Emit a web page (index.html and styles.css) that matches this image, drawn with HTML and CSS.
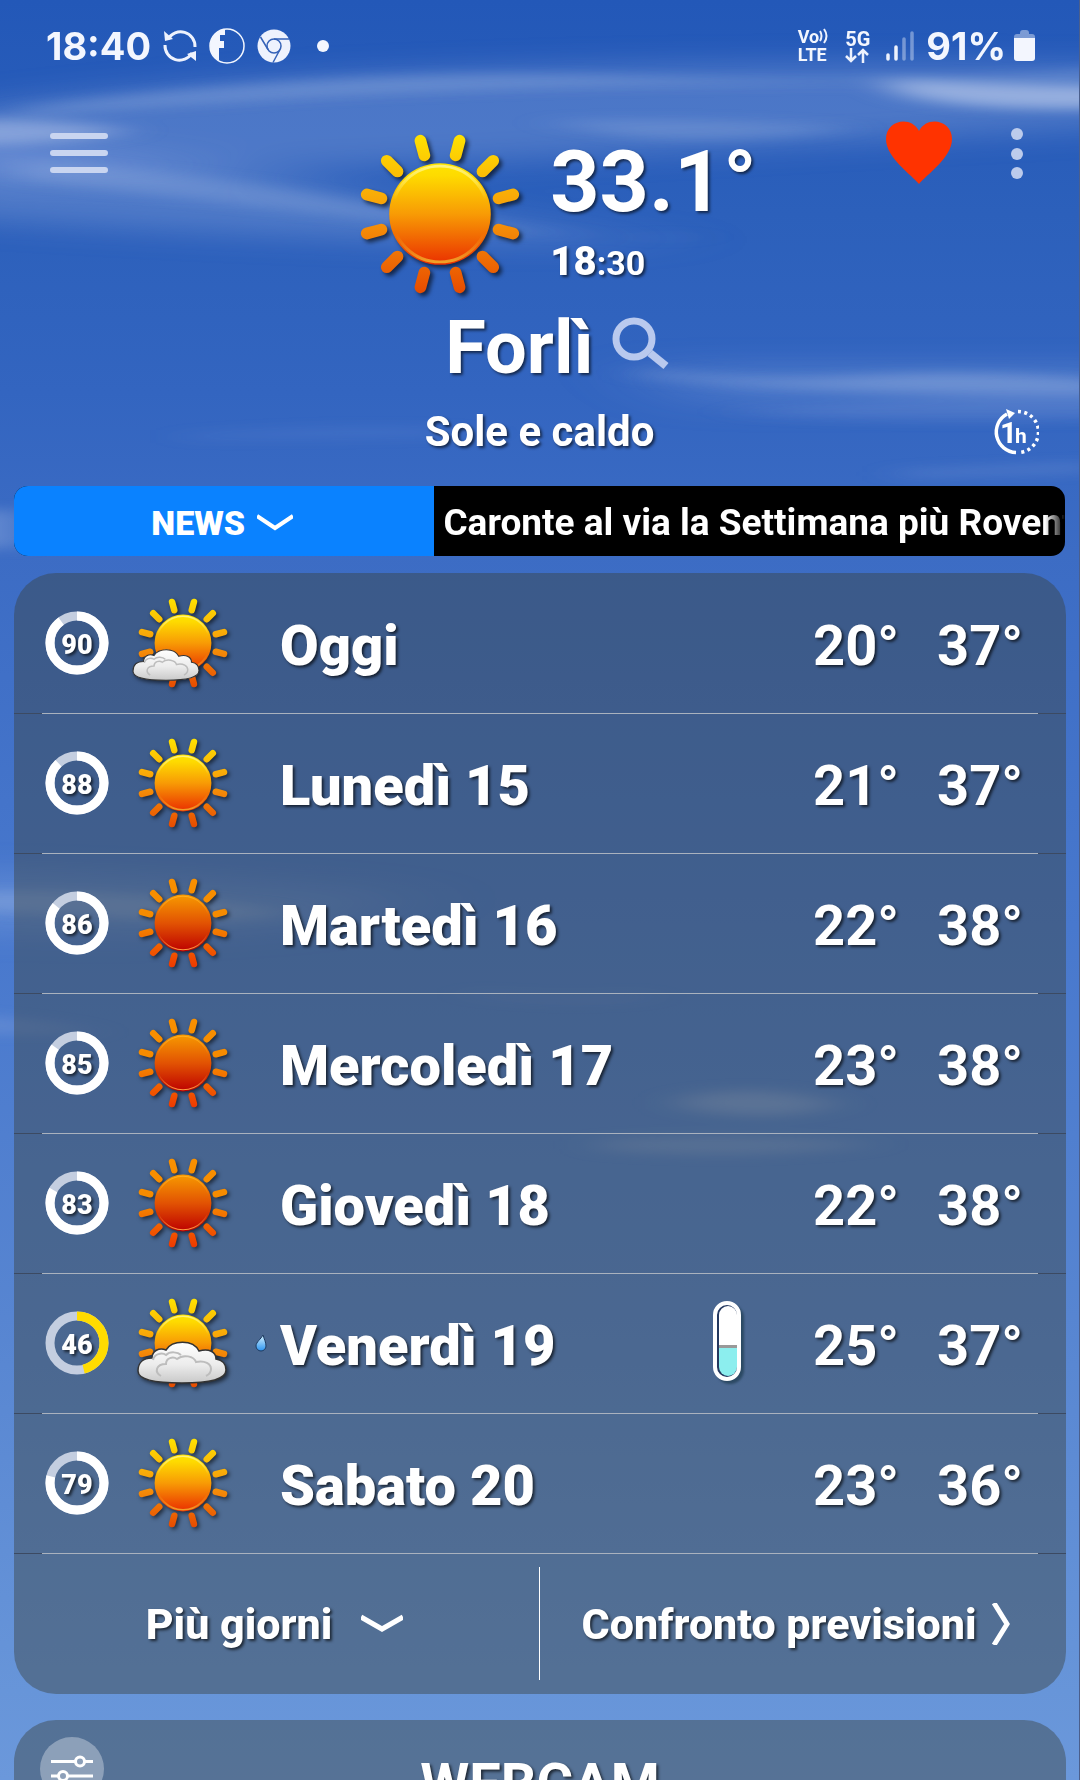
FILE: index.html
```html
<!DOCTYPE html>
<html lang="it">
<head>
<meta charset="utf-8">
<meta name="viewport" content="width=device-width, initial-scale=1">
<title>Meteo Forlì</title>
<link rel="stylesheet" href="styles.css">
</head>
<body>
<svg class="defs" aria-hidden="true">
  <defs>
    <linearGradient id="disc" x1="0" y1="0" x2="0" y2="1">
      <stop offset="0" stop-color="#ffe400"/><stop offset=".12" stop-color="#fedb00"/><stop offset=".5" stop-color="#f89b05"/><stop offset="1" stop-color="#ea2e00"/>
    </linearGradient>
    <linearGradient id="disc-hot" x1="0" y1="0" x2="0" y2="1">
      <stop offset="0" stop-color="#f79a00"/><stop offset=".5" stop-color="#e25303"/><stop offset="1" stop-color="#bd0000"/>
    </linearGradient>
    <linearGradient id="rays" gradientUnits="userSpaceOnUse" x1="0" y1="-82" x2="0" y2="82">
      <stop offset="0" stop-color="#ffe300"/><stop offset=".5" stop-color="#f79a0a"/><stop offset="1" stop-color="#e74a00"/>
    </linearGradient>
    <linearGradient id="rays-hot" gradientUnits="userSpaceOnUse" x1="0" y1="-82" x2="0" y2="82">
      <stop offset="0" stop-color="#f99000"/><stop offset=".5" stop-color="#f58a00"/><stop offset="1" stop-color="#ee3800"/>
    </linearGradient>
    <linearGradient id="rim" x1="0" y1="0" x2="0" y2="1">
      <stop offset="0" stop-color="#fff27a"/><stop offset=".35" stop-color="#fff27a" stop-opacity="0"/><stop offset=".7" stop-color="#f4a020" stop-opacity="0"/><stop offset="1" stop-color="#f0a028"/>
    </linearGradient>
    <linearGradient id="rim-hot" x1="0" y1="0" x2="0" y2="1">
      <stop offset="0" stop-color="#ffb020"/><stop offset=".35" stop-color="#ffb020" stop-opacity="0"/><stop offset=".7" stop-color="#ffa040" stop-opacity="0"/><stop offset="1" stop-color="#ffa040"/>
    </linearGradient>
    <linearGradient id="puff" x1="0" y1="0" x2="0" y2="1">
      <stop offset="0" stop-color="#fff"/><stop offset=".55" stop-color="#ececec"/><stop offset="1" stop-color="#c9c9c9"/>
    </linearGradient>
    <linearGradient id="water" x1="0" y1="0" x2="0" y2="1">
      <stop offset="0" stop-color="#d8f4ff"/><stop offset="1" stop-color="#2a93f0"/>
    </linearGradient>
    <path id="beams" fill="none" stroke-width="12" stroke-linecap="round" d="M16 -60L20 -75M43.500 -43.500L54.500 -54.500M60 -16L75 -20M60 16L75 20M43.500 43.500L54.500 54.500M16 60L20 75M-16 60L-20 75M-43.500 43.500L-54.500 54.500M-60 16L-75 20M-60 -16L-75 -20M-43.500 -43.500L-54.500 -54.500M-16 -60L-20 -75"/>
    <symbol id="sun" viewBox="-86 -86 172 172">
      <use href="#beams" stroke="url(#rays)"/>
      <circle r="52" fill="url(#disc)"/><circle r="49" fill="none" stroke="url(#rim)" stroke-width="3"/>
    </symbol>
    <symbol id="sun-hot" viewBox="-86 -86 172 172">
      <use href="#beams" stroke="url(#rays-hot)"/>
      <circle r="52" fill="url(#disc-hot)"/><circle r="49" fill="none" stroke="url(#rim-hot)" stroke-width="2"/>
    </symbol>
    <symbol id="cloud" viewBox="0 0 90 44">
      <path d="M15 18C15 11 22 7 29 10C35 0 56 -1 62 11C72 8 79 12 79 19C86 20 89 25 89 30C89 40 72 43 45 43C18 43 1 40 1 31C1 23 6 18 15 18Z" fill="url(#puff)" stroke="#333" stroke-width="1.500"/>
      <path d="M24 36C17 32 19 24 29 24C29 18 36 16 40 19C46 14 57 16 59 22C68 20 74 24 74 29C74 33 71 35 69 36M16 20C17 14 25 12 29 15C33 11 41 12 44 15" fill="none" stroke="#bdbdbd" stroke-width="2"/>
    </symbol>
  </defs>
</svg>

<div class="screen">
  <svg class="sky" viewBox="0 0 1080 1780" preserveAspectRatio="none" aria-hidden="true">
    <defs>
      <filter id="soft" x="-50%" y="-200%" width="200%" height="500%"><feGaussianBlur stdDeviation="22 6"/></filter>
      <filter id="haze" x="-50%" y="-200%" width="200%" height="500%"><feGaussianBlur stdDeviation="50 14"/></filter>
    </defs>
    <g filter="url(#haze)" fill="#b4c6ee">
      <path d="M-100 120Q300 50 1180 66V124Q700 150 500 160T-100 180Z" opacity=".26"/>
      <path d="M-100 140Q150 144 340 190T700 240Q420 250 -100 214Z" opacity=".26"/>
      <path d="M640 366H1180V404H700Z" opacity=".2"/>
      <path d="M-100 870Q160 870 420 896Q300 950 -100 930Z" opacity=".18"/>
    </g>
    <g filter="url(#soft)" fill="#c3d0ee">
      <path d="M880 78Q980 84 1130 86V108Q960 112 900 94Z" opacity=".62"/>
      <path d="M-60 118Q60 118 130 130Q90 144 -60 146Z" opacity=".46"/>
      <path d="M20 108Q340 66 620 76T1120 68V78Q900 82 640 86T20 116Z" opacity=".26"/>
      <path d="M20 160Q200 170 400 208T720 236Q560 240 400 222T20 180Z" opacity=".2"/>
      <path d="M540 122Q700 116 860 128Q760 144 640 138Z" opacity=".2"/>
      <path d="M640 368Q740 384 860 376T1120 382V392Q850 398 640 376Z" opacity=".3"/>
      <path d="M720 412Q900 398 1120 390V418Q900 426 720 412Z" opacity=".12"/>
      <path d="M180 434Q420 418 500 434Q420 440 180 440Z" opacity=".08"/>
      <path d="M900 470L1100 462V472L900 478Z" opacity=".16"/>
      <path d="M-60 510H20V548H-60Z" opacity=".3"/>
      <path d="M-60 892Q120 886 290 912Q240 928 60 914L-60 910Z" opacity=".22"/>
      <path d="M-60 1012Q60 1020 100 1034H-60Z" opacity=".16"/>
      <path d="M680 1098Q760 1080 840 1104Q780 1126 680 1108Z" opacity=".32"/>
      <path d="M600 1140Q740 1130 880 1144Q760 1162 600 1150Z" opacity=".24"/>
      <path d="M470 990Q560 1000 650 992V1000Q560 1008 470 996Z" opacity=".1"/>
    </g>
  </svg>

  <div class="status">
    <div class="status-left">
      <span class="clock">18:40</span>
      <svg class="i34" viewBox="0 0 34 34" fill="none" stroke="#eef2fd" stroke-width="3"><path d="M5 10A14.500 14.500 0 0 1 32 18M29 24A14.500 14.500 0 0 1 2 16"/><path d="M1 2L2 12L10 10ZM33 32V22L24 25Z" fill="#eef2fd" stroke="none"/></svg>
      <svg class="i36" viewBox="0 0 36 36"><clipPath id="round"><circle cx="18" cy="18" r="17"/></clipPath><path clip-path="url(#round)" fill="#f3f6fe" d="M0 0H16V7H11V13H15V20H10V36H0Z"/><circle cx="18" cy="18" r="17" fill="none" stroke="#f3f6fe" stroke-width="1.500"/></svg>
      <svg class="i34" viewBox="0 0 34 34"><circle cx="17" cy="17" r="16.500" fill="#eef2fd"/><g fill="none" stroke="#3562b8" stroke-width="1.500"><circle cx="17" cy="17" r="7"/><path d="M17 10H32M11 20.500L3.500 8M23 20.500L16 33.500"/></g></svg>
      <svg class="i12" viewBox="0 0 12 12"><circle cx="6" cy="6" r="6" fill="#f3f6fe"/></svg>
    </div>
    <div class="status-right">
      <span class="net"><span class="volte">Vo<svg viewBox="0 0 10 16" fill="none" stroke="#eef2fd" stroke-width="2"><path d="M1 3Q4 8 1 13M5 1Q10 8 5 15"/></svg></span><span>LTE</span></span>
      <span class="net"><span class="five">5G</span><svg class="updown" viewBox="0 0 24 15" fill="none" stroke="#eef2fd" stroke-width="2.500"><path d="M6 0V13M1 8L6 13L11 8M18 15V2M13 7L18 2L23 7"/></svg></span>
      <svg class="bars" viewBox="0 0 28 30" fill="none" stroke="#eef2fd" stroke-width="3.500" stroke-linecap="round"><path d="M2 24V28M10 16V28"/><path d="M18 8V28M26 2V28" opacity=".4"/></svg>
      <span class="clock">91%</span>
      <svg class="battery" viewBox="0 0 21 32"><path d="M6 3Q6 0 9 0H12Q15 0 15 3V4H18Q21 4 21 7V9H0V7Q0 4 3 4H6Z" fill="#fff" opacity=".4"/><path d="M0 8H21V28Q21 31 18 31H3Q0 31 0 28Z" fill="#f3f6fe"/></svg>
    </div>
  </div>

  <header class="top">
    <button class="plain menu" aria-label="Menu"><svg viewBox="0 0 58 42" stroke="#c9d5f0" stroke-width="6" stroke-linecap="round"><path d="M3 4H55M3 21H55M3 38H55"/></svg></button>
    <div class="now">
      <svg class="now-sun" viewBox="0 0 172 172"><use href="#sun" x="2" y="2" width="168" height="168"/></svg>
      <div>
        <div class="degrees">33.1°</div>
        <div class="time">18<small>:30</small></div>
      </div>
    </div>
    <div class="actions">
      <button class="plain" aria-label="Preferito"><svg class="heart" viewBox="0 0 66 64"><path fill="#ff3300" d="M33 64C26 55 0 38 0 19C0 0 25 -5 33 11C41 -5 66 0 66 19C66 38 40 55 33 64Z"/></svg></button>
      <button class="plain kebab" aria-label="Altro"><svg viewBox="0 0 12 52" fill="#bccbec"><circle cx="6" cy="6" r="6"/><circle cx="6" cy="26" r="6"/><circle cx="6" cy="45" r="6"/></svg></button>
    </div>
  </header>

  <div class="place">
    <h1>Forlì</h1>
    <button class="plain" aria-label="Cerca"><svg class="search" viewBox="0 0 58 54" fill="none" stroke="#b9c9ee"><circle cx="22" cy="22" r="18" stroke-width="7"/><path d="M38 36L54 49" stroke-width="8"/></svg></button>
  </div>
  <div class="summary">
    <p>Sole e caldo</p>
    <button class="plain hourly" aria-label="Previsioni orarie">
      <svg viewBox="0 0 46 46" fill="none" stroke="#fff" stroke-width="3.500"><path d="M23 43.500A20.500 20.500 0 0 1 14 5"/><path d="M25 2.500A20.500 20.500 0 0 1 25 43.500" stroke-dasharray="3 3.400"/><path d="M13 0L22 4L16 10Z" fill="#fff" stroke="none"/><text x="7" y="34" font-size="30" fill="#fff" stroke="none">1</text><text x="22" y="34" font-size="21" fill="#fff" stroke="none">h</text></svg>
    </button>
  </div>

  <div class="news">
    <button class="news-toggle">NEWS <svg viewBox="0 0 36 18" fill="none" stroke="#fff" stroke-width="4"><path d="M0 2L18 14L36 2"/></svg></button>
    <a class="ticker" href="#">Caronte al via la Settimana più Rovente</a>
  </div>

  <main>
    <section class="card">
      <ol class="days">
        <li>
          <svg class="ring" viewBox="0 0 64 64"><circle class="track" cx="32" cy="32" r="27"/><circle class="value" cx="32" cy="32" r="27" pathLength="100" stroke-dasharray="90 100"/><text x="32" y="43">90</text></svg>
          <span class="sky-icon"><svg viewBox="0 0 112 98"><use href="#sun" x="10" y="2" width="94" height="94"/><use href="#cloud" x="6" y="54" width="68" height="33"/></svg></span>
          <span></span><span class="day">Oggi</span><span></span><span class="temp">20°</span><span class="temp">37°</span>
        </li>
        <li>
          <svg class="ring" viewBox="0 0 64 64"><circle class="track" cx="32" cy="32" r="27"/><circle class="value" cx="32" cy="32" r="27" pathLength="100" stroke-dasharray="88 100"/><text x="32" y="43">88</text></svg>
          <span class="sky-icon"><svg viewBox="0 0 112 98"><use href="#sun" x="10" y="2" width="94" height="94"/></svg></span>
          <span></span><span class="day">Lunedì 15</span><span></span><span class="temp">21°</span><span class="temp">37°</span>
        </li>
        <li>
          <svg class="ring" viewBox="0 0 64 64"><circle class="track" cx="32" cy="32" r="27"/><circle class="value" cx="32" cy="32" r="27" pathLength="100" stroke-dasharray="86 100"/><text x="32" y="43">86</text></svg>
          <span class="sky-icon"><svg viewBox="0 0 112 98"><use href="#sun-hot" x="10" y="2" width="94" height="94"/></svg></span>
          <span></span><span class="day">Martedì 16</span><span></span><span class="temp">22°</span><span class="temp">38°</span>
        </li>
        <li>
          <svg class="ring" viewBox="0 0 64 64"><circle class="track" cx="32" cy="32" r="27"/><circle class="value" cx="32" cy="32" r="27" pathLength="100" stroke-dasharray="85 100"/><text x="32" y="43">85</text></svg>
          <span class="sky-icon"><svg viewBox="0 0 112 98"><use href="#sun-hot" x="10" y="2" width="94" height="94"/></svg></span>
          <span></span><span class="day">Mercoledì 17</span><span></span><span class="temp">23°</span><span class="temp">38°</span>
        </li>
        <li>
          <svg class="ring" viewBox="0 0 64 64"><circle class="track" cx="32" cy="32" r="27"/><circle class="value" cx="32" cy="32" r="27" pathLength="100" stroke-dasharray="83 100"/><text x="32" y="43">83</text></svg>
          <span class="sky-icon"><svg viewBox="0 0 112 98"><use href="#sun-hot" x="10" y="2" width="94" height="94"/></svg></span>
          <span></span><span class="day">Giovedì 18</span><span></span><span class="temp">22°</span><span class="temp">38°</span>
        </li>
        <li>
          <svg class="ring" viewBox="0 0 64 64"><circle class="track" cx="32" cy="32" r="27"/><circle class="value low" cx="32" cy="32" r="27" pathLength="100" stroke-dasharray="46 100"/><text x="32" y="43">46</text></svg>
          <span class="sky-icon"><svg viewBox="0 0 112 98"><use href="#sun" x="10" y="2" width="94" height="94"/><use href="#cloud" x="11" y="46" width="90" height="44"/></svg></span>
          <svg class="drop" viewBox="0 0 12 18"><path d="M8 1C9 5 11 8 11 12A5 5 0 0 1 1 12C1 8 6 5 8 1Z" fill="url(#water)" stroke="#1c3a60"/></svg>
          <span class="day">Venerdì 19</span>
          <svg class="gauge" viewBox="0 0 28 84"><rect x="2" y="2" width="24" height="76" rx="12" fill="#24385f"/><path d="M6 44V14A9 9 0 0 1 24 14V44Z" fill="#fff"/><path d="M6 44H24V66A9 9 0 0 1 6 66Z" fill="#8ceeee"/><path d="M6 44H24V47H6Z" fill="#999"/><rect x="2" y="2" width="24" height="76" rx="12" fill="none" stroke="#fff" stroke-width="4"/></svg>
          <span class="temp">25°</span><span class="temp">37°</span>
        </li>
        <li>
          <svg class="ring" viewBox="0 0 64 64"><circle class="track" cx="32" cy="32" r="27"/><circle class="value" cx="32" cy="32" r="27" pathLength="100" stroke-dasharray="79 100"/><text x="32" y="43">79</text></svg>
          <span class="sky-icon"><svg viewBox="0 0 112 98"><use href="#sun" x="10" y="2" width="94" height="94"/></svg></span>
          <span></span><span class="day">Sabato 20</span><span></span><span class="temp">23°</span><span class="temp">36°</span>
        </li>
      </ol>
      <div class="more">
        <button class="plain">Più giorni <svg class="down" viewBox="0 0 42 20" fill="none" stroke="#fff" stroke-width="5"><path d="M0 3L21 15L42 3"/></svg></button>
        <a href="#">Confronto previsioni <svg class="right" viewBox="0 0 20 42" fill="none" stroke="#fff" stroke-width="5"><path d="M3 0L16 21L3 42"/></svg></a>
      </div>
    </section>

    <section class="card webcam">
      <button class="settings" aria-label="Impostazioni webcam"><svg viewBox="0 0 42 42" fill="none" stroke="#fff" stroke-width="3"><path d="M0 13.500H24M34 13.500H42M0 28H7M17 28H42"/><circle cx="29" cy="13.500" r="4.500"/><circle cx="12" cy="28" r="4.500"/></svg></button>
      <h2>WEBCAM</h2>
    </section>
  </main>
</div>
</body>
</html>
```
FILE: styles.css
```css
* { box-sizing: border-box; }

body {
  margin: 0;
  font-family: Roboto, "Liberation Sans", sans-serif;
  font-weight: 700;
  color: #fff;
}

svg { display: block; }
.defs { position: absolute; width: 0; height: 0; }

h1, h2, p, ol { margin: 0; padding: 0; }
button, a { font: inherit; color: inherit; text-decoration: none; }

button {
  border: 0;
  padding: 0;
  cursor: pointer;
}

.plain { background: none; }

.screen {
  position: relative;
  height: 100vh;
  overflow: hidden;
  border-right: 1px solid #4b5f8c;
  background: linear-gradient(#2358b8 0, #2c60bb 12%, #3365c0 22%, #3c6cc4 31%, #4878cd 52%, #5785d1 74%, #6795d9 95%, #6b98db 100%);
}

/* Cloud streaks behind the whole page */
.sky {
  position: absolute;
  inset: 0;
  width: 100%;
  height: 100%;
}

.status, .top, .place, .summary, .news, main { position: relative; }

/* Status bar */
.status {
  display: flex;
  justify-content: space-between;
  align-items: center;
  height: 92px;
  padding: 0 44px 0 46px;
  color: #f3f6fe;
}

.status-left, .status-right { display: flex; align-items: center; }
.status-left { gap: 12px; }
.status-right { gap: 16px; }
.status-right .clock { margin: 0 -8px 0 -4px; }

.clock {
  font-family: Inter, Roboto, sans-serif;
  font-size: 38px;
  line-height: 48px;
}

.i34 { width: 34px; height: 34px; }
.i36 { width: 36px; height: 36px; }
.i12 { width: 12px; height: 12px; margin-left: 14px; }

.net {
  display: grid;
  font-size: 18px;
  line-height: 18px;
}

.volte { display: flex; }
.volte svg { width: 10px; height: 16px; }
.five { font-size: 20px; }
.updown { width: 24px; height: 15px; }
.bars { width: 28px; height: 30px; }
.battery { width: 21px; height: 32px; }

/* Current conditions */
.top {
  display: grid;
  grid-template-columns: 1fr auto 1fr;
  align-items: start;
  margin-top: 28px;
  padding: 0 50px;
}

.menu { justify-self: start; padding: 12px 0; }
.menu svg { width: 58px; height: 42px; }

.now {
  display: flex;
  gap: 24px;
  padding: 8px 0 0 32px;
  text-shadow: 2px 2px 3px rgba(0, 0, 0, .6);
}

.now-sun {
  width: 172px;
  height: 172px;
  filter: drop-shadow(3px 3px 2px rgba(0, 0, 0, .6));
}

.degrees {
  padding-top: 10px;
  font-size: 86px;
  line-height: 88px;
}

.time {
  padding-top: 12px;
  font-size: 40px;
  font-weight: 900;
  line-height: 48px;
}

.time small { font-size: 34px; font-weight: 700; }

.actions {
  display: flex;
  align-items: flex-start;
  justify-self: end;
  gap: 53px;
}

.heart { width: 66px; height: 64px; }
.kebab { width: 24px; padding: 8px 6px 0; }
.kebab svg { width: 12px; height: 52px; }

.place {
  display: flex;
  justify-content: center;
  gap: 18px;
  padding: 8px 0 0 36px;
  text-shadow: 2px 2px 3px rgba(0, 0, 0, .6);
}

.place h1 { font-size: 74px; line-height: 80px; }
.place button { padding-bottom: 8px; }
.search { width: 58px; height: 54px; }

.summary {
  display: grid;
  grid-template-columns: 1fr auto 1fr;
  padding: 20px 40px 0;
}

.summary p {
  grid-column: 2;
  font-size: 42px;
  line-height: 48px;
  text-shadow: 2px 2px 3px rgba(0, 0, 0, .6);
}

.hourly { justify-self: end; }
.hourly svg { width: 46px; height: 46px; }

/* News ticker */
.news {
  display: grid;
  grid-template-columns: 2fr 3fr;
  height: 70px;
  margin: 30px 14px 0;
  border-radius: 14px;
  overflow: hidden;
  background: #000;
}

.news-toggle {
  display: flex;
  justify-content: center;
  align-items: center;
  gap: 12px;
  padding: 4px 4px 0 0;
  background: #0a82ff;
  font-size: 34px;
  font-weight: 900;
  line-height: 40px;
}

.news-toggle svg { width: 36px; height: 18px; }

.ticker {
  min-width: 0;
  padding-left: 9px;
  overflow: hidden;
  white-space: nowrap;
  font-size: 37px;
  line-height: 74px;
  -webkit-mask-image: linear-gradient(to left, transparent 0, #000 20px);
  mask-image: linear-gradient(to left, transparent 0, #000 20px);
}

/* Forecast cards */
main {
  display: flex;
  flex-direction: column;
  gap: 26px;
  padding: 17px 13px 0 14px;
}

.card {
  border-radius: 42px;
  background-color: rgba(58, 64, 60, .43);
  text-shadow: 2px 2px 3px rgba(0, 0, 0, .65);
}

.days { list-style: none; }

.days li {
  display: grid;
  grid-template-columns: 64px 146px 25px 1fr 100px 124px 122px;
  align-items: center;
  height: 140px;
  padding: 0 7px 0 31px;
}

.days li + li, .more {
  background:
    linear-gradient(#aab2be, #aab2be) 28px 0 / calc(100% - 56px) 1px no-repeat,
    linear-gradient(#3c4a62, #3c4a62) 0 0 / 100% 1px no-repeat;
}

.ring { width: 64px; height: 64px; }

.ring circle {
  fill: none;
  stroke-width: 9;
  transform: rotate(-90deg);
  transform-origin: 32px 32px;
}

.ring .track { stroke: #c4cee0; }
.ring .value { stroke: #fff; }
.ring .low { stroke: #ffdc00; }
.ring text { fill: #fff; font-size: 27px; font-weight: 900; text-anchor: middle; }

.sky-icon { justify-self: center; }

.sky-icon svg {
  width: 112px;
  height: 98px;
  filter: drop-shadow(2px 2px 2px rgba(0, 0, 0, .6));
}

.drop { width: 12px; height: 18px; }

.gauge {
  width: 28px;
  height: 84px;
  filter: drop-shadow(3px 3px 1px rgba(30, 60, 80, .7));
}

.day, .temp {
  padding-top: 6px;
  font-size: 56px;
  line-height: 66px;
  white-space: nowrap;
}

.day { font-weight: 900; }

.more {
  display: grid;
  grid-template-columns: 1fr 1fr;
  height: 141px;
  padding: 14px 0;
  font-size: 43px;
  font-weight: 800;
  line-height: 48px;
}

.more > * {
  display: flex;
  justify-content: center;
  align-items: center;
}

.more button {
  gap: 29px;
  padding-right: 4px;
  border-right: 1px solid #fff;
  text-shadow: inherit;
}

.more a { gap: 14px; padding-right: 14px; }
.down { width: 42px; height: 20px; }
.right { width: 20px; height: 42px; }

.webcam {
  display: grid;
  grid-template-columns: 1fr auto 1fr;
  align-items: start;
  height: 420px;
  padding: 17px 26px;
}

.settings {
  display: grid;
  place-items: center;
  width: 64px;
  height: 64px;
  border-radius: 50%;
  background: rgba(255, 255, 255, .33);
}

.settings svg { width: 42px; height: 42px; }

.webcam h2 {
  padding-top: 14px;
  font-size: 56px;
  line-height: 66px;
}
```
